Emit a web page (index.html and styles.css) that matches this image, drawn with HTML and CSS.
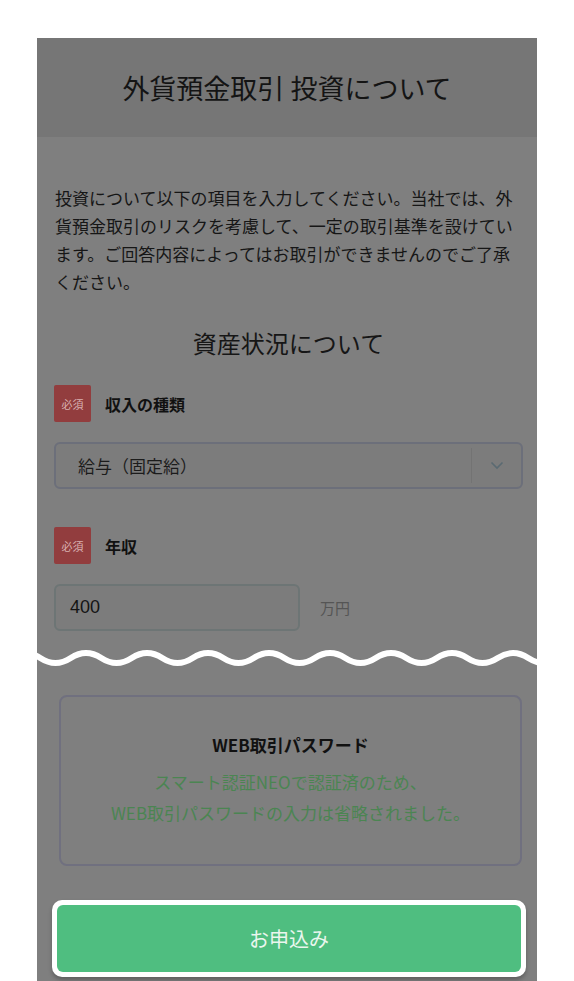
FILE: index.html
```html
<!DOCTYPE html>
<html lang="ja">
<head>
<meta charset="utf-8">
<title>外貨預金取引 投資について</title>
<link rel="stylesheet" href="styles.css">
</head>
<body>
<div class="panel">
  <header class="head">外貨預金取引 投資について</header>
  <div class="content">
    <p class="intro">投資について以下の項目を入力してください。当社では、外貨預金取引のリスクを考慮して、一定の取引基準を設けています。ご回答内容によってはお取引ができませんのでご了承ください。</p>
    <h2 class="section">資産状況について</h2>
    <div class="field first">
      <div class="label"><span class="badge">必須</span><span class="label-text">収入の種類</span></div>
      <div class="select">
        <span class="select-value">給与（固定給）</span>
        <span class="select-arrow">
          <svg width="14" height="9" viewBox="0 0 14 9"><path d="M1.5 1.5 L7 7 L12.5 1.5" fill="none" stroke="#5a6a72" stroke-width="1.6"/></svg>
        </span>
      </div>
    </div>
    <div class="field second">
      <div class="label"><span class="badge">必須</span><span class="label-text">年収</span></div>
      <div class="input-row">
        <div class="input">400</div>
        <span class="unit">万円</span>
      </div>
    </div>
  </div>
  <svg class="wave" width="500" height="22" viewBox="0 0 500 22">
    <path d="M-12 6 C3 6 3.5 16 18.5 16 S34 6 49 6 S64.5 16 79.5 16 S95 6 110 6 S125.5 16 140.5 16 S156 6 171 6 S186.5 16 201.5 16 S217 6 232 6 S247.5 16 262.5 16 S278 6 293 6 S308.5 16 323.5 16 S339 6 354 6 S369.5 16 384.5 16 S400 6 415 6 S430.5 16 445.5 16 S461 6 476 6 S491.5 16 506.5 16" fill="none" stroke="#ffffff" stroke-width="6"/>
  </svg>
  <div class="pw-box">
    <div class="pw-title">WEB取引パスワード</div>
    <div class="pw-note">スマート認証NEOで認証済のため、<br>WEB取引パスワードの入力は省略されました。</div>
  </div>
  <div class="btn-wrap">
    <div class="btn">お申込み</div>
  </div>
</div>
</body>
</html>
```

FILE: styles.css
```css
html, body {
  margin: 0;
  padding: 0;
  background: #ffffff;
}
body {
  font-family: "Noto Sans CJK JP", "Noto Sans", sans-serif;
  color: #151515;
}
.panel {
  margin: 38px 0 0 37px;
  width: 500px;
  min-height: 943px;
  background: #7f7f7f;
  display: flex;
  flex-direction: column;
}
.head {
  height: 99px;
  background: #767676;
  display: flex;
  align-items: center;
  justify-content: center;
  font-size: 27px;
  color: #141414;
}
.content {
  padding: 0 14px 0 17px;
}
.intro {
  margin: 47px 0 0 1px;
  font-size: 17px;
  line-height: 28px;
  color: #161616;
}
.section {
  margin: 30px 0 0;
  font-size: 24px;
  font-weight: normal;
  line-height: 34px;
  text-align: center;
  color: #161616;
}
.field.first { margin-top: 25px; }
.field.second { margin-top: 38px; }
.label {
  display: flex;
  align-items: center;
  gap: 14px;
}
.badge {
  width: 37px;
  height: 37px;
  border-radius: 2px;
  background: #923d3e;
  color: #d8b0b0;
  font-size: 11px;
  display: flex;
  align-items: center;
  justify-content: center;
}
.label-text {
  font-size: 16px;
  font-weight: bold;
  color: #111;
}
.select {
  margin-top: 20px;
  height: 43px;
  border: 2px solid #6c6f7a;
  border-radius: 6px;
  background: #7c7c7c;
  display: flex;
  align-items: center;
}
.select-value {
  flex: 1;
  padding-left: 22px;
  font-size: 17px;
  color: #1c1c1c;
}
.select-arrow {
  width: 49px;
  height: 35px;
  border-left: 1px solid #737373;
  display: flex;
  align-items: center;
  justify-content: center;
}
.input-row {
  margin-top: 20px;
  display: flex;
  align-items: center;
}
.input {
  width: 228px;
  height: 43px;
  padding-left: 14px;
  border: 2px solid #6d7575;
  border-radius: 6px;
  background: #7c7c7c;
  font-family: "Liberation Sans", Arial, sans-serif;
  font-size: 18px;
  line-height: 43px;
  color: #141414;
}
.unit {
  margin-left: 20px;
  font-size: 15px;
  color: #555555;
}
.wave {
  display: block;
  margin-top: 16px;
}
.pw-box {
  margin: 26px 15px 0 22px;
  border: 2px solid #70707f;
  border-radius: 8px;
  padding: 35px 0 36px;
  text-align: center;
}
.pw-title {
  font-size: 17px;
  font-weight: bold;
  line-height: 26px;
  color: #111;
}
.pw-note {
  margin-top: 8px;
  font-size: 17px;
  line-height: 31px;
  color: #4b8552;
}
.btn-wrap {
  margin: 34px 11px 6px 15px;
  padding: 5px;
  background: #ffffff;
  border-radius: 10px;
  box-shadow: 0 3px 4px rgba(0,0,0,0.25);
}
.btn {
  height: 67px;
  border-radius: 6px;
  background: #4fbe80;
  color: #eaf6ee;
  font-size: 20px;
  display: flex;
  align-items: center;
  justify-content: center;
}
```
